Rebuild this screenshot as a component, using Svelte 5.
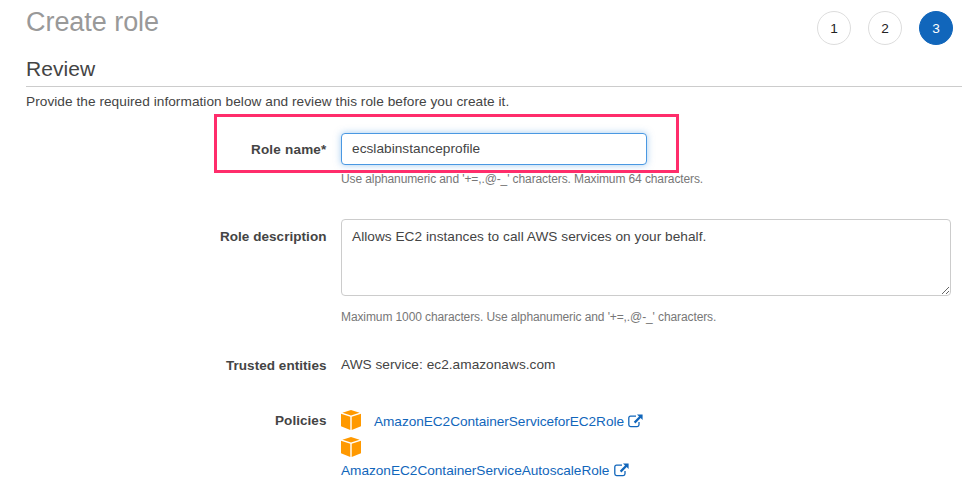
<script>
  const steps = [1, 2, 3];
  const current = 3;
  let roleName = $state('ecslabinstanceprofile');
  let description = $state('Allows EC2 instances to call AWS services on your behalf.');
</script>

{#snippet cube()}
  <svg class="cube" viewBox="0 0 20 20" aria-hidden="true">
    <path d="M10 0 18.6 2.7 10 5.5 1.4 2.7Z" />
    <path d="M0 3.8 9.3 6.8V20L0 16.2Z" />
    <path d="M20 3.8 10.7 6.8V20L20 16.2Z" />
  </svg>
{/snippet}

{#snippet external()}
  <svg class="external" viewBox="0 0 15 14" aria-hidden="true">
    <path d="M8 2.2H2.6Q.8 2.2 .8 4v6.8q0 1.8 1.8 1.8h6.6q1.8 0 1.8-1.8V8" fill="none" stroke="currentColor" stroke-width="1.3" />
    <path d="M9 .4h5.6V6L12.7 4.1 7.4 9.4 5.8 7.8 11 2.4Z" fill="currentColor" />
  </svg>
{/snippet}

<main>
  <header>
    <h1>Create role</h1>
    <ol>
      {#each steps as step}
        <li class:active={step === current}>{step}</li>
      {/each}
    </ol>
  </header>
  <h2>Review</h2>
  <p class="intro">Provide the required information below and review this role before you create it.</p>

  <div class="row name">
    <label for="role">Role name*</label>
    <div class="field">
      <input id="role" bind:value={roleName} spellcheck="false" />
      <p class="hint">Use alphanumeric and '+=,.@-_' characters. Maximum 64 characters.</p>
    </div>
    <div class="highlight"></div>
  </div>

  <div class="row desc">
    <label for="description">Role description</label>
    <div class="field">
      <textarea id="description" bind:value={description} spellcheck="false"></textarea>
      <p class="hint">Maximum 1000 characters. Use alphanumeric and '+=,.@-_' characters.</p>
    </div>
  </div>

  <div class="row trusted">
    <span class="label">Trusted entities</span>
    <div class="field">AWS service: ec2.amazonaws.com</div>
  </div>

  <div class="row policies">
    <span class="label">Policies</span>
    <div class="field">
      <div class="policy">
        {@render cube()}
        <a class="first" href="#ec2">AmazonEC2ContainerServiceforEC2Role{@render external()}</a>
      </div>
      <div class="policy wrapped">
        {@render cube()}
        <a class="second" href="#autoscale">AmazonEC2ContainerServiceAutoscaleRole{@render external()}</a>
      </div>
    </div>
  </div>
</main>

<style>
  :global(body) {
    margin: 0;
    background: #fff;
    overflow: hidden;
  }
  main {
    box-sizing: border-box;
    width: 974px;
    height: 497px;
    padding: 0 12px 0 26px;
    overflow: hidden;
    color: #444;
    font: 13.65px/18px "Liberation Sans", Arial, sans-serif;
    letter-spacing: .04px;
  }
  h1, h2, p, ol { margin: 0; padding: 0; font-weight: 400; }
  header {
    display: flex;
    justify-content: space-between;
    height: 54px;
  }
  h1 {
    color: #999;
    font-size: 27px;
    line-height: 32px;
    letter-spacing: -.05px;
    padding-top: 6px;
  }
  ol {
    display: flex;
    gap: 17px;
    list-style: none;
    padding: 11px 9px 0 0;
  }
  li {
    box-sizing: border-box;
    width: 34px;
    height: 34px;
    border: 1px solid #ddd;
    border-radius: 50%;
    color: #222;
    line-height: 33px;
    text-align: center;
  }
  li.active {
    background: #1166bb;
    border-color: #1166bb;
    color: #fff;
  }
  h2 {
    height: 32px;
    border-bottom: 1px solid #ccc;
    font-size: 21px;
    line-height: 30px;
  }
  .intro { padding-top: 6px; height: 21px; white-space: nowrap; letter-spacing: .05px; }
  .row { display: flex; position: relative; }
  label, .label {
    width: 300.5px;
    margin-right: 14.5px;
    flex: none;
    text-align: right;
    font-weight: 700;
    font-size: 13.5px;
    letter-spacing: .05px;
  }
  .field { flex: 1; white-space: nowrap; }
  input, textarea {
    box-sizing: border-box;
    display: block;
    margin: 0;
    border: 1px solid #ccc;
    border-radius: 4px;
    outline: 0;
    background: #fff;
    color: #444;
    font: inherit;
    letter-spacing: .04px;
  }
  .name { height: 72.5px; padding-top: 18.5px; }
  .name label { padding-top: 8px; letter-spacing: .2px; }
  input {
    width: 306px;
    height: 32px;
    padding: 0 10px;
    border-color: #4a98e2;
    box-shadow: 0 0 7px rgba(74, 152, 226, .5);
  }
  .hint {
    color: #777;
    font-size: 12px;
    line-height: 16px;
    letter-spacing: -.105px;
  }
  .name .hint { padding-top: 6px; }
  .highlight {
    position: absolute;
    box-sizing: border-box;
    left: 188px;
    top: 0;
    width: 465px;
    height: 59px;
    border: 3px solid #ff2d6b;
  }
  .desc { height: 137px; padding-top: 13.5px; }
  .desc label { padding-top: 9px; }
  textarea {
    width: 610px;
    height: 77px;
    padding: 8px 10px;
    resize: both;
  }
  .desc .hint { padding-top: 13px; }
  .trusted { height: 55px; }
  .label { padding-top: 1px; }
  .policy { display: flex; align-items: flex-start; height: 20px; gap: 13px; }
  .policy .first { padding-top: 2px; letter-spacing: -.05px; }
  .second { letter-spacing: -.02px; }
  .wrapped { display: block; height: auto; margin-top: 7px; }
  .cube { display: block; width: 20px; height: 20px; margin-top: -1px; fill: #ff9900; flex: none; }
  a { color: #1166bb; text-decoration: none; }
  .wrapped a { display: block; padding-top: 5px; }
  .external { width: 15px; height: 14px; margin-left: 4.3px; vertical-align: -2px; }
</style>
